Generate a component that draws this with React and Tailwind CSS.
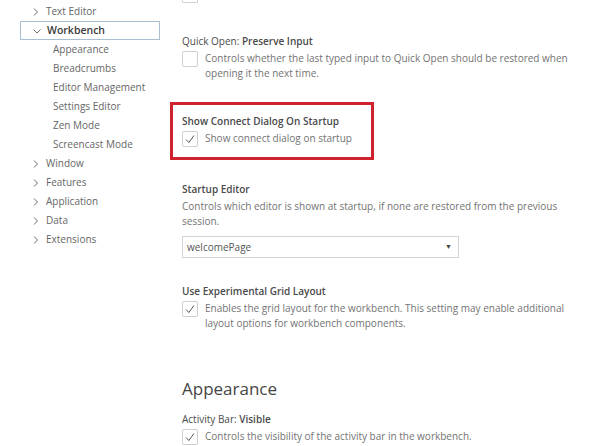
import React from "react";

const font = { fontFamily: '"Open Sans", "Noto Sans", sans-serif' };

function Chevron({ down }) {
  return (
    <svg width="10" height="10" viewBox="0 0 10 10" className="shrink-0">
      {down ? (
        <path d="M1.5 3.5 L5 7 L8.5 3.5" fill="none" stroke="#6b6b6b" strokeWidth="1" />
      ) : (
        <path d="M3 1.5 L6.5 5 L3 8.5" fill="none" stroke="#6b6b6b" strokeWidth="1" />
      )}
    </svg>
  );
}

function TopItem({ label }) {
  return (
    <div className="h-[19px] flex items-center pl-[31px] gap-[5px] text-[10px] text-[#666] whitespace-nowrap">
      <Chevron />
      <span>{label}</span>
    </div>
  );
}

function Child({ label }) {
  return <div className="h-[19px] flex items-center pl-[53px] text-[10px] text-[#666] whitespace-nowrap">{label}</div>;
}

function Box({ checked }) {
  return (
    <div className="w-[16px] h-[16px] shrink-0 border border-[#cfcfcf] rounded-[2px] bg-white flex items-center justify-center">
      {checked && (
        <svg width="14" height="14" viewBox="0 0 14 14">
          <path d="M3 7.5 L5.8 10.5 L11 3.5" fill="none" stroke="#555" strokeWidth="1" />
        </svg>
      )}
    </div>
  );
}

function Title({ cat, label }) {
  return (
    <div className="text-[10px] leading-[15px] text-[#4a4a4a] whitespace-nowrap">
      {cat && <span className="font-medium">{cat}</span>}
      <span className="font-semibold">{label}</span>
    </div>
  );
}

function CheckRow({ checked, children }) {
  return (
    <div className="flex gap-[7px] mt-[2px]">
      <Box checked={checked} />
      <div className="text-[10px] leading-[15px] text-[#737373] whitespace-nowrap">{children}</div>
    </div>
  );
}

export default function App() {
  return (
    <div className="w-[590px] h-[446px] bg-white flex overflow-hidden" style={font}>
      <div className="w-[170px] shrink-0 pt-[2px]">
        <TopItem label="Text Editor" />
        <div className="h-[19px] ml-[20px] w-[140px] border border-[#a9bfd1] flex items-center pl-[11px] gap-[5px] text-[10.5px] font-semibold text-[#3a3a3a]">
          <Chevron down />
          <span>Workbench</span>
        </div>
        <Child label="Appearance" />
        <Child label="Breadcrumbs" />
        <Child label="Editor Management" />
        <Child label="Settings Editor" />
        <Child label="Zen Mode" />
        <Child label="Screencast Mode" />
        <TopItem label="Window" />
        <TopItem label="Features" />
        <TopItem label="Application" />
        <TopItem label="Data" />
        <TopItem label="Extensions" />
      </div>

      <div className="flex-1 flex flex-col">
        <div className="ml-[12px] w-[16px] h-[3px] border-l border-r border-b border-[#cfcfcf] rounded-b-[2px]" />

        <div className="pl-[12px] mt-[31px]">
          <Title cat="Quick Open: " label="Preserve Input" />
          <CheckRow>
            Controls whether the last typed input to Quick Open should be restored when
            <br />
            opening it the next time.
          </CheckRow>
        </div>

        <div className="mt-[21px] w-[204px] border-[3px] border-[#d0222e] pl-[9px] pt-[9px] pb-[10px]">
          <Title label="Show Connect Dialog On Startup" />
          <CheckRow checked>Show connect dialog on startup</CheckRow>
        </div>

        <div className="pl-[12px] mt-[22px]">
          <Title label="Startup Editor" />
          <div className="mt-[2px] text-[10px] leading-[15px] text-[#737373] whitespace-nowrap">
            Controls which editor is shown at startup, if none are restored from the previous
            <br />
            session.
          </div>
          <div className="mt-[7px] w-[277px] h-[22px] border border-[#d4d4d4] flex items-center justify-between pl-[4px] pr-[6px] text-[10px] text-[#555]">
            <span>welcomePage</span>
            <span className="text-[7px] text-[#444]">▼</span>
          </div>
        </div>

        <div className="pl-[12px] mt-[26px]">
          <Title label="Use Experimental Grid Layout" />
          <CheckRow checked>
            Enables the grid layout for the workbench. This setting may enable additional
            <br />
            layout options for workbench components.
          </CheckRow>
        </div>

        <div className="pl-[12px] mt-[46px]">
          <div className="text-[17px] leading-[24px] text-[#454545]">Appearance</div>
          <div className="mt-[11px]">
            <Title cat="Activity Bar: " label="Visible" />
            <CheckRow checked>Controls the visibility of the activity bar in the workbench.</CheckRow>
          </div>
        </div>
      </div>
    </div>
  );
}
